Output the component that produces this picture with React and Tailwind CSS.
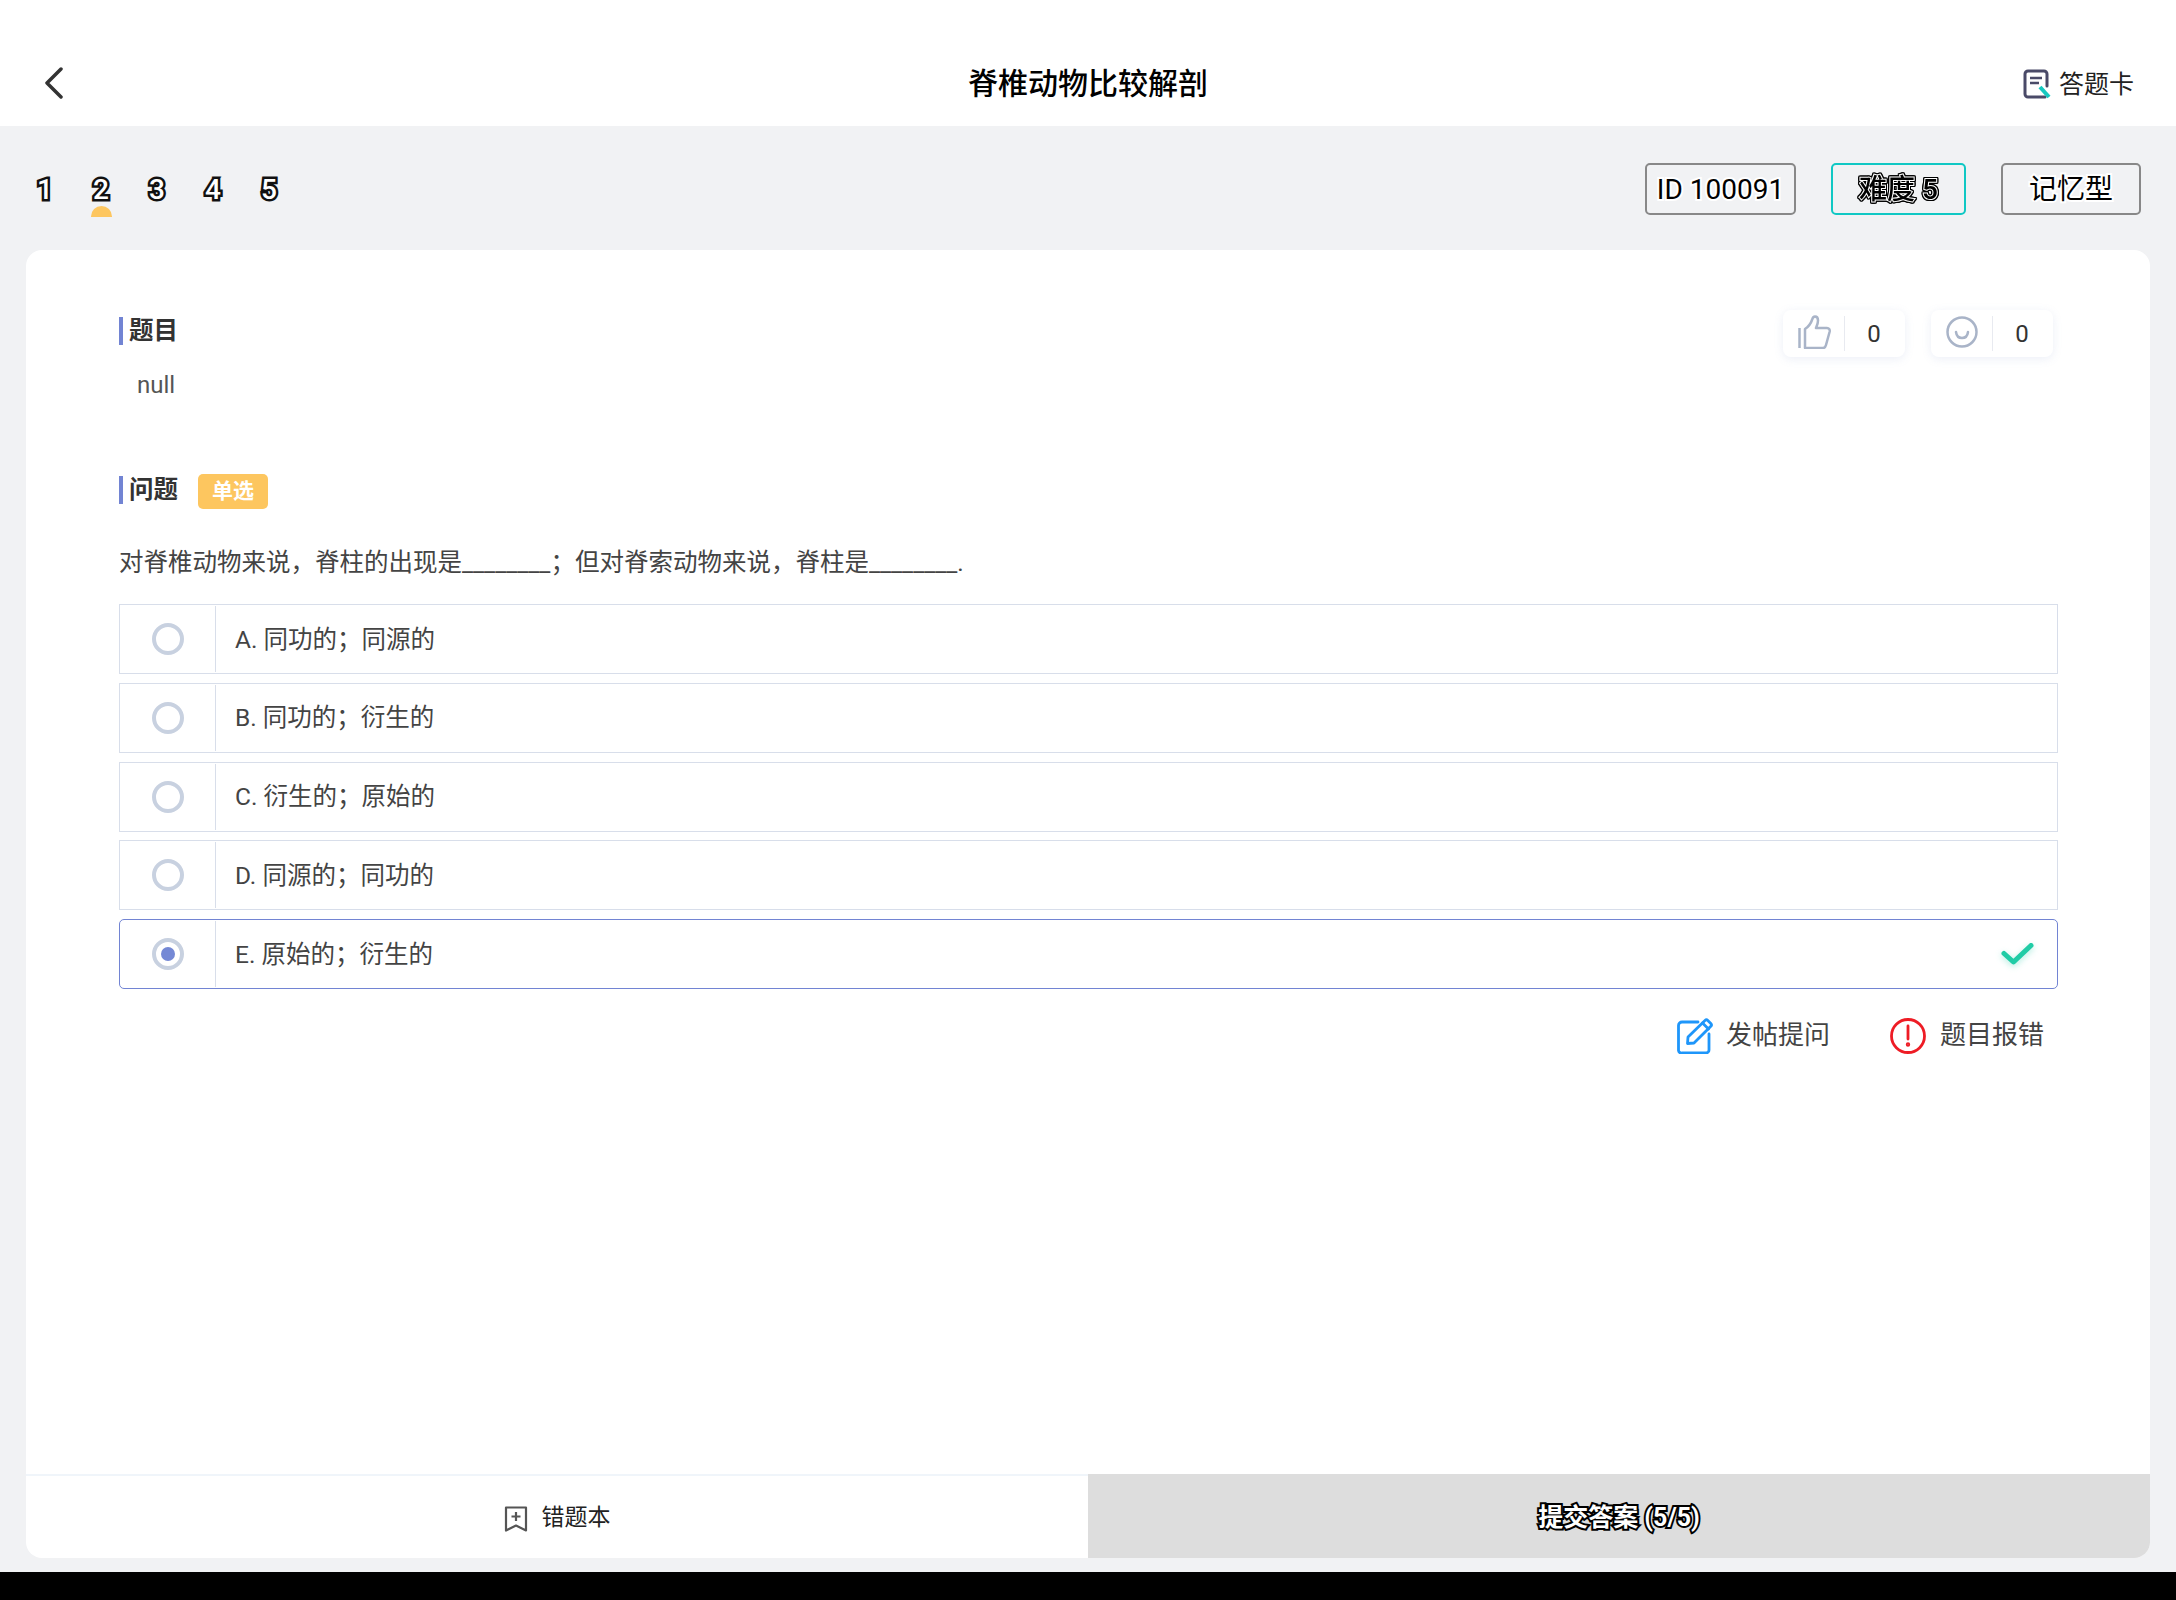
import React from "react";

const options = [
  { label: "A. 同功的；同源的" },
  { label: "B. 同功的；衍生的" },
  { label: "C. 衍生的；原始的" },
  { label: "D. 同源的；同功的" },
  { label: "E. 原始的；衍生的", selected: true },
];

const SectionTitle = ({ children }) => (
  <div className="flex items-center h-7">
    <span className="w-1 h-7 bg-[#7284d3]" />
    <span className="ml-[6px] text-[24.5px] leading-7 font-bold text-[#333]">{children}</span>
  </div>
);

const ThumbIcon = () => (
  <svg width="34" height="34" viewBox="0 0 34 34" fill="none" stroke="#a9b4c8" strokeWidth="2.5" strokeLinejoin="round">
    <path d="M1.500 13v20" />
    <path d="M7 14c3-2 6-6 7-9 .5-2 1-3.500 3-3.500s3 2 3 4c0 3-1 5-2 7.500h11c2 0 3 1.500 2.700 3.500L28 30c-.5 2-1.500 3-3 3H7z" />
  </svg>
);

const SmileIcon = () => (
  <svg width="32" height="32" viewBox="0 0 32 32" fill="none" stroke="#a9b4c8" strokeWidth="2.500" strokeLinecap="round">
    <circle cx="16" cy="16" r="14.500" />
    <path d="M10 16c.5 4 3 6 6 6s5.500-2 6-6" />
  </svg>
);

const CountBox = ({ icon, iconClass }) => (
  <div className="flex items-center w-[122px] h-[47px] bg-white rounded-lg shadow-[0_2px_10px_rgba(120,140,200,0.14)]">
    <div className={`flex justify-center w-[61px] ${iconClass}`}>{icon}</div>
    <span className="w-px h-[35px] bg-[#e8eaf0]" />
    <span className="flex-1 pr-[2px] text-center text-[24px] text-[#333]">0</span>
  </div>
);

const Radio = ({ selected }) => (
  <span className="flex items-center justify-center w-8 h-8 rounded-full border-4 border-[#c8d1e0]">
    {selected && <span className="w-[14px] h-[14px] rounded-full bg-[#7488d5]" />}
  </span>
);

const OptionRow = ({ label, selected }) => (
  <div
    className={`flex items-center h-[70px] border-[1.5px] ${
      selected ? "border-[#7284d3] rounded-[5px]" : "border-[#d8deea]"
    }`}
  >
    <div className="flex items-center justify-center w-[96px] h-[66px] border-r-[1.5px] border-[#d8deea]">
      <Radio selected={selected} />
    </div>
    <span className="flex-1 pl-[19px] pt-[2px] text-[24.5px] text-[#444]">{label}</span>
    {selected && (
      <svg className="mr-[23px] drop-shadow-[0_2px_3px_rgba(33,204,166,0.35)]" width="33" height="24" viewBox="0 0 33 24" fill="none" stroke="#21cca6" strokeWidth="5" strokeLinecap="round" strokeLinejoin="round">
        <path d="M3 11.500l9.500 8.500L30 3.500" />
      </svg>
    )}
  </div>
);

const App = () => {
  return (
    <div className="flex flex-col w-[2176px] h-[1600px] bg-[#f1f2f4] font-['Roboto','Noto_Sans_CJK_SC',sans-serif] overflow-hidden">
      <header className="grid grid-cols-3 items-center h-[126px] pt-10 bg-white shrink-0">
        <div className="pl-[44px]">
          <svg width="20" height="32" viewBox="0 0 20 32" fill="none" stroke="#333" strokeWidth="3.500" strokeLinecap="round" strokeLinejoin="round">
            <path d="M17 2L3 16l14 14" />
          </svg>
        </div>
        <h1 className="pt-[1px] text-center text-[30px] font-medium text-black">脊椎动物比较解剖</h1>
        <div className="flex items-center justify-end gap-[7px] pr-[42px]">
          <svg className="mt-[1px]" width="29" height="30" viewBox="0 0 29 30" fill="none">
            <path d="M24 17V5a3 3 0 0 0-3-3H5a3 3 0 0 0-3 3v20a3 3 0 0 0 3 3h17" stroke="#4a4a68" strokeWidth="3" strokeLinecap="round" />
            <path d="M7 9h12M7 14h9" stroke="#4a4a68" strokeWidth="2.500" />
            <path d="M17 18l9 10" stroke="#16c8c0" strokeWidth="4" />
          </svg>
          <span className="pt-[3px] text-[25px] text-[#222]">答题卡</span>
        </div>
      </header>

      <div className="flex items-center justify-between h-[124px] shrink-0 pl-4 pr-[35px]">
        <div className="flex pl-[1px] pt-[3px]">
          {[1, 2, 3, 4, 5].map((n) => (
            <div key={n} className="relative flex justify-center w-14 text-[28px] font-medium text-white [-webkit-text-stroke:5px_#111] [paint-order:stroke_fill]">
              {n}
              {n === 2 && (
                <span className="absolute left-[18px] top-[37px] w-[21px] h-[11px] rounded-t-full bg-[#fdc65f]" />
              )}
            </div>
          ))}
        </div>
        <div className="flex gap-[35px] pt-[1px]">
          <div className="flex items-center justify-center w-[151px] h-[52px] pt-[3px] border-2 border-[#888] rounded-[5px] text-[28px] text-black [-webkit-text-stroke:4px_#fff] [paint-order:stroke_fill]">
            ID 100091
          </div>
          <div className="flex items-center justify-center w-[135px] h-[52px] pt-[3px] border-2 border-[#10c8c4] rounded-[5px] text-[28px]">
            <span className="font-medium text-black [-webkit-text-stroke:2px_#fff] [paint-order:stroke_fill] [filter:drop-shadow(1px_0_0_#000)_drop-shadow(-1px_0_0_#000)_drop-shadow(0_1px_0_#000)_drop-shadow(0_-1px_0_#000)]">
              难度 5
            </span>
          </div>
          <div className="flex items-center justify-center w-[140px] h-[52px] pt-[3px] border-2 border-[#888] rounded-[5px] text-[28px] text-black [-webkit-text-stroke:4px_#fff] [paint-order:stroke_fill]">
            记忆型
          </div>
        </div>
      </div>

      <main className="flex flex-col h-[1308px] mx-[26px] bg-white rounded-2xl overflow-hidden shrink-0">
        <div className="flex flex-col flex-1 pl-[93px] pr-[92px] pt-[60px]">
          <div className="flex items-start justify-between">
            <div className="mt-[7px]">
              <SectionTitle>题目</SectionTitle>
            </div>
            <div className="flex gap-[26px] pr-[5px]">
              <CountBox icon={<ThumbIcon />} iconClass="-mt-[3px] pl-[3px]" />
              <CountBox icon={<SmileIcon />} iconClass="-mt-[3px]" />
            </div>
          </div>
          <p className="mt-[10px] ml-[18px] text-[24px] leading-9 text-[#555]">null</p>

          <div className="flex items-start gap-[20px] mt-[71px]">
            <div className="mt-[2px]">
              <SectionTitle>问题</SectionTitle>
            </div>
            <span className="flex items-center justify-center w-[70px] h-[35px] rounded-[5px] bg-[#fdc65f] text-[21px] font-bold text-white">单选</span>
          </div>

          <p className="mt-[36px] text-[24.5px] leading-9 text-[#444]">
            对脊椎动物来说，脊柱的出现是________；但对脊索动物来说，脊柱是________.
          </p>

          <div className="flex flex-col gap-[8.75px] mt-[23px]">
            {options.map((o) => (
              <OptionRow key={o.label} label={o.label} selected={o.selected} />
            ))}
          </div>

          <div className="flex items-center justify-end gap-[60px] mt-[27px] pr-[14px]">
            <div className="flex items-center gap-[13px]">
              <svg width="36" height="36" viewBox="0 0 36 36" fill="none" stroke="#1e96fa" strokeWidth="2.800" strokeLinecap="round" strokeLinejoin="round">
                <path d="M21 4H5a3.500 3.500 0 0 0-3.500 3.500v25A3 3 0 0 0 5 35h24a3 3 0 0 0 3-3V16" />
                <path d="M11 19L28 2.500a2 2 0 0 1 2.800 0l3 3a2 2 0 0 1 0 2.800L17 25l-6.500.5z" />
                <path d="M25.500 5l6 6" />
              </svg>
              <span className="text-[26px] text-[#444]">发帖提问</span>
            </div>
            <div className="flex items-center gap-[14px]">
              <svg width="36" height="36" viewBox="0 0 36 36" fill="none" stroke="#ee1c25" strokeWidth="2.800" strokeLinecap="round">
                <circle cx="18" cy="18" r="16.500" />
                <path d="M18 8v13" />
                <circle cx="18" cy="26.500" r="0.800" fill="#ee1c25" />
              </svg>
              <span className="text-[26px] text-[#444]">题目报错</span>
            </div>
          </div>
        </div>

        <footer className="flex h-[84px] shrink-0">
          <div className="flex items-center justify-center gap-[14px] w-1/2 pt-[3px] border-t-2 border-[#f0f5fa]">
            <svg width="24" height="26" viewBox="0 0 24 26" fill="none" stroke="#555" strokeWidth="2.200" strokeLinejoin="round">
              <path d="M2 1.500h20v23l-10-5-10 5z" />
              <path d="M12 6v9M7.500 10.500h9" />
            </svg>
            <span className="text-[23px] text-[#222]">错题本</span>
          </div>
          <div className="flex items-center justify-center w-1/2 pt-[4px] bg-[#dddddd] text-[25px] font-bold text-white [-webkit-text-stroke:4px_#000] [paint-order:stroke_fill]">
            提交答案 (5/5)
          </div>
        </footer>
      </main>

      <div className="flex-1 mt-[14px] bg-black" />
    </div>
  );
};

export default App;
